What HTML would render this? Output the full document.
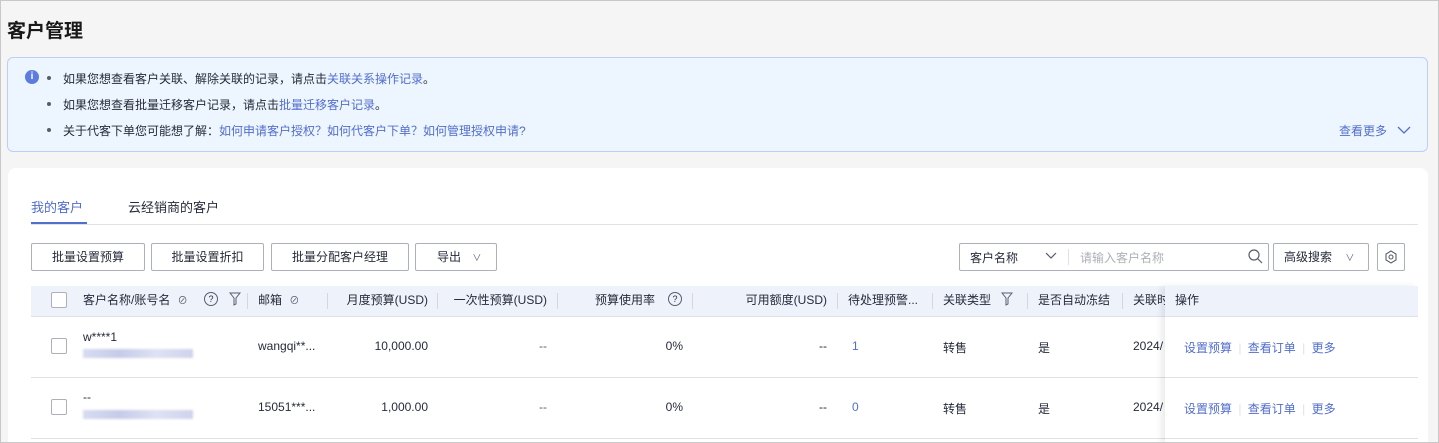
<!DOCTYPE html>
<html><head><meta charset="utf-8"><style>
*{box-sizing:border-box;margin:0;padding:0}
html,body{width:1439px;height:443px;overflow:hidden}
body{background:#f5f5f5;font-family:"Liberation Sans","Noto Sans CJK SC",sans-serif;font-size:12px;color:#252b3a;position:relative}
.a{position:absolute;white-space:nowrap}
.blue{color:#526ecc}
.btn{position:absolute;top:243px;height:28px;border:1px solid #adb0b8;border-radius:2px;background:#fff;font-size:12px;text-align:center;line-height:26px;color:#252b3a}
.sep{position:absolute;top:293px;width:1px;height:16px;background:#d5d7dc}
.cb{position:absolute;left:51px;width:16px;height:16px;border:1px solid #adb0b8;border-radius:2px;background:#fff}
.th{top:292px;line-height:16px;color:#252b3a}
.blur{background:linear-gradient(90deg,#d8dcf0,#c6cbe8,#dfe2f3,#cfd3ec);height:9px;filter:blur(1px)}
</style></head><body>
<div class="a" style="left:7px;top:16px;font-size:19px;font-weight:bold;color:#191919">客户管理</div>
<div class="a" style="left:7px;top:57px;width:1421px;height:95px;background:#edf5ff;border:1px solid #bcd0f5;border-radius:6px"></div>
<div class="a" style="left:25px;top:70px;width:14px;height:14px;border-radius:50%;background:#5e7ce0;color:#fff;font-size:10px;font-weight:bold;text-align:center;line-height:14px">i</div>
<div class="a" style="left:47px;top:76px;width:4px;height:4px;border-radius:50%;background:#575d6c"></div>
<div class="a" style="left:47px;top:102px;width:4px;height:4px;border-radius:50%;background:#575d6c"></div>
<div class="a" style="left:47px;top:128px;width:4px;height:4px;border-radius:50%;background:#575d6c"></div>
<div class="a" style="left:63px;top:70px">如果您想查看客户关联、解除关联的记录，请点击<span class="blue">关联关系操作记录</span>。</div>
<div class="a" style="left:63px;top:96px">如果您想查看批量迁移客户记录，请点击<span class="blue">批量迁移客户记录</span>。</div>
<div class="a" style="left:63px;top:122px">关于代客下单您可能想了解：<span class="blue">如何申请客户授权？如何代客户下单？如何管理授权申请?</span></div>
<div class="a blue" style="left:1339px;top:122px">查看更多</div>
<svg class="a" style="left:1397px;top:125px" width="14" height="10"><path d="M1 2l6 6 6-6" fill="none" stroke="#526ecc" stroke-width="1.3"/></svg>

<div class="a" style="left:8px;top:168px;width:1420px;height:275px;background:#fff;border-radius:8px 8px 0 0"></div>
<div class="a blue" style="left:31px;top:197px;font-size:13px">我的客户</div>
<div class="a" style="left:128px;top:197px;font-size:13px;color:#252b3a">云经销商的客户</div>
<div class="a" style="left:31px;top:224px;width:1387px;height:1px;background:#dfe1e6"></div>
<div class="a" style="left:31px;top:222px;width:56px;height:2px;background:#526ecc"></div>

<div class="btn" style="left:31px;width:114px">批量设置预算</div>
<div class="btn" style="left:151px;width:113px">批量设置折扣</div>
<div class="btn" style="left:271px;width:138px">批量分配客户经理</div>
<div class="btn" style="left:415px;width:82px;text-align:left;padding-left:21px">导出 <span style="margin-left:8px;font-size:9px;color:#575d6c">∨</span></div>

<div class="a" style="left:959px;top:243px;width:310px;height:28px;border:1px solid #adb0b8;border-radius:2px;background:#fff"></div>
<div class="a" style="left:970px;top:249px">客户名称</div>
<svg class="a" style="left:1045px;top:252px" width="12" height="8"><path d="M1 1l5 5 5-5" fill="none" stroke="#575d6c" stroke-width="1.2"/></svg>
<div class="a" style="left:1068px;top:249px;width:1px;height:16px;background:#dfe1e6"></div>
<div class="a" style="left:1080px;top:249px;color:#adb0b8">请输入客户名称</div>
<svg class="a" style="left:1248px;top:249px" width="15" height="15"><circle cx="6" cy="6" r="5" fill="none" stroke="#575d6c" stroke-width="1.2"/><path d="M10 10l4 4" stroke="#575d6c" stroke-width="1.2"/></svg>
<div class="btn" style="left:1273px;width:96px;text-align:left;padding-left:10px">高级搜索 <span style="margin-left:10px;font-size:9px;color:#575d6c">∨</span></div>
<div class="btn" style="left:1377px;width:28px"></div>
<svg class="a" style="left:1384px;top:250px" width="14" height="14"><path d="M7 1l5 3v6l-5 3-5-3V4z" fill="none" stroke="#575d6c" stroke-width="1.1"/><circle cx="7" cy="7" r="2" fill="none" stroke="#575d6c" stroke-width="1.1"/></svg>

<div class="a" style="left:31px;top:286px;width:1387px;height:30px;background:#eef2fb"></div>
<div class="a" style="left:31px;top:316px;width:1387px;height:1px;background:#dfe1e6"></div>
<div class="a" style="left:31px;top:377px;width:1387px;height:1px;background:#dfe1e6"></div>
<div class="a" style="left:31px;top:438px;width:1387px;height:1px;background:#dfe1e6"></div>
<div class="cb" style="top:292px"></div>
<div class="cb" style="top:338px"></div>
<div class="cb" style="top:399px"></div>

<div class="a th" style="left:83px">客户名称/账号名 <span style="font-size:10px;color:#575d6c;margin-left:4px">⊘</span></div>
<div class="a" style="left:204px;top:292px;width:14px;height:14px;border:1px solid #575d6c;border-radius:50%;font-size:9px;text-align:center;line-height:12px">?</div>
<svg class="a" style="left:229px;top:292px" width="12" height="14"><path d="M1 1h10L7 6v6L5 13V6z" fill="none" stroke="#575d6c"/></svg>
<div class="sep" style="left:247px"></div>
<div class="a th" style="left:258px">邮箱 <span style="font-size:10px;color:#575d6c;margin-left:4px">⊘</span></div>
<div class="sep" style="left:327px"></div>
<div class="a th" style="right:1011px">月度预算(USD)</div>
<div class="sep" style="left:437px"></div>
<div class="a th" style="right:892px">一次性预算(USD)</div>
<div class="sep" style="left:557px"></div>
<div class="a th" style="left:595px">预算使用率</div>
<div class="a" style="left:668px;top:292px;width:14px;height:14px;border:1px solid #575d6c;border-radius:50%;font-size:9px;text-align:center;line-height:12px">?</div>
<div class="sep" style="left:692px"></div>
<div class="a th" style="right:612px">可用额度(USD)</div>
<div class="sep" style="left:837px"></div>
<div class="a th" style="left:848px">待处理预警...</div>
<div class="sep" style="left:932px"></div>
<div class="a th" style="left:943px">关联类型</div>
<svg class="a" style="left:1001px;top:292px" width="12" height="14"><path d="M1 1h10L7 6v6L5 13V6z" fill="none" stroke="#575d6c"/></svg>
<div class="sep" style="left:1027px"></div>
<div class="a th" style="left:1038px">是否自动冻结</div>
<div class="sep" style="left:1122px"></div>
<div class="a th" style="left:1133px">关联时</div>

<div class="a" style="left:83px;top:330px">w****1</div>
<div class="a blur" style="left:83px;top:349px;width:110px"></div>
<div class="a" style="left:258px;top:339px">wangqi**...</div>
<div class="a" style="right:1011px;top:339px">10,000.00</div>
<div class="a" style="right:892px;top:339px;color:#575d6c">--</div>
<div class="a" style="right:756px;top:339px">0%</div>
<div class="a" style="right:612px;top:339px">--</div>
<div class="a blue" style="left:852px;top:339px">1</div>
<div class="a" style="left:943px;top:339px">转售</div>
<div class="a" style="left:1038px;top:339px">是</div>
<div class="a" style="left:1133px;top:339px">2024/</div>

<div class="a" style="left:83px;top:390px">--</div>
<div class="a blur" style="left:83px;top:410px;width:110px"></div>
<div class="a" style="left:258px;top:400px">15051***...</div>
<div class="a" style="right:1011px;top:400px">1,000.00</div>
<div class="a" style="right:892px;top:400px;color:#575d6c">--</div>
<div class="a" style="right:756px;top:400px">0%</div>
<div class="a" style="right:612px;top:400px">--</div>
<div class="a blue" style="left:852px;top:400px">0</div>
<div class="a" style="left:943px;top:400px">转售</div>
<div class="a" style="left:1038px;top:400px">是</div>
<div class="a" style="left:1133px;top:400px">2024/</div>

<div class="a" style="left:1165px;top:286px;width:253px;height:157px;background:#fff;box-shadow:-4px 0 6px rgba(0,0,0,.08)"></div>
<div class="a" style="left:1165px;top:286px;width:253px;height:30px;background:#eef2fb"></div>
<div class="a" style="left:1165px;top:316px;width:253px;height:1px;background:#dfe1e6"></div>
<div class="a" style="left:1165px;top:377px;width:253px;height:1px;background:#dfe1e6"></div>
<div class="a" style="left:1165px;top:438px;width:253px;height:1px;background:#dfe1e6"></div>
<div class="a th" style="left:1175px">操作</div>
<div class="a blue" style="left:1184px;top:339px">设置预算 <span style="color:#dfe1e6;margin:0 3px">|</span> 查看订单 <span style="color:#dfe1e6;margin:0 3px">|</span> 更多</div>
<div class="a blue" style="left:1184px;top:400px">设置预算 <span style="color:#dfe1e6;margin:0 3px">|</span> 查看订单 <span style="color:#dfe1e6;margin:0 3px">|</span> 更多</div>
<div class="a" style="left:0;top:0;width:1439px;height:443px;border:1px solid #c8c8c8;pointer-events:none"></div>
</body></html>
